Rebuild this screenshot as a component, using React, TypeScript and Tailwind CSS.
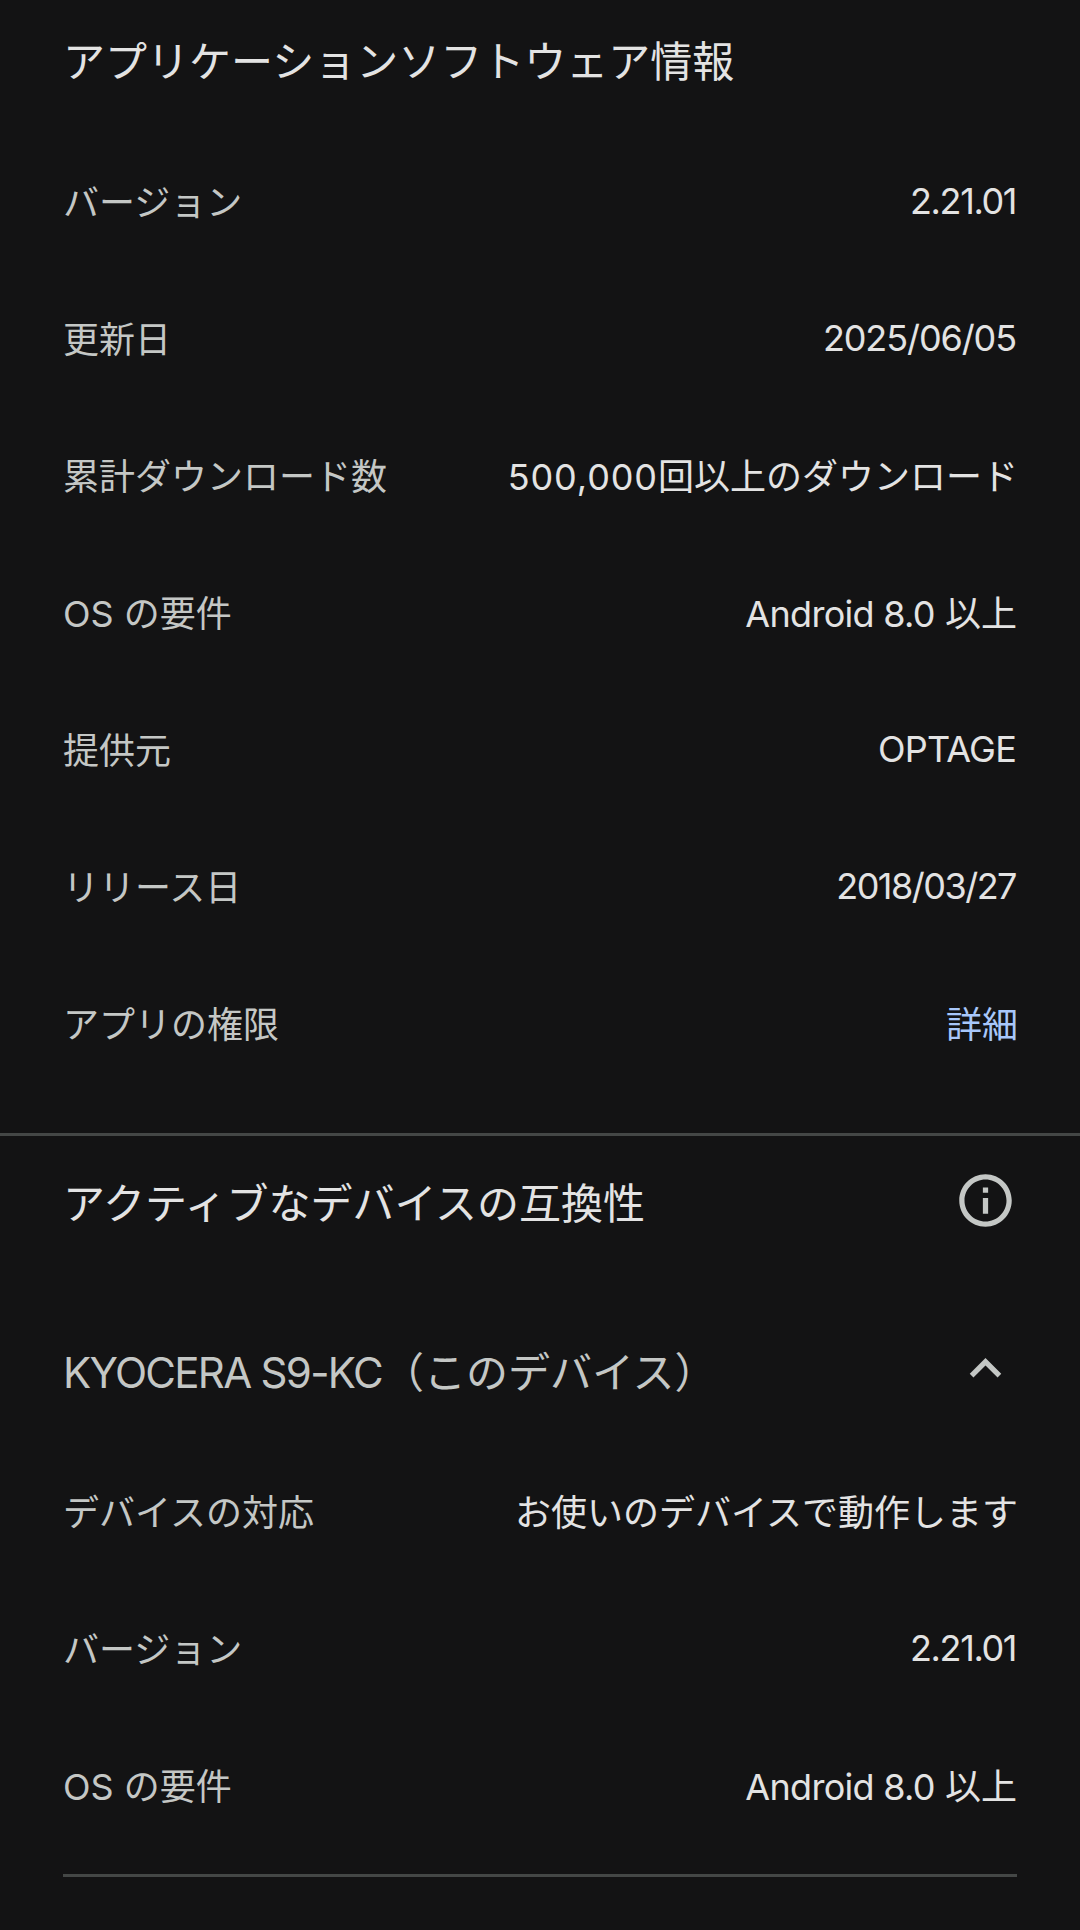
const font = 'font-["Inter","Noto_Sans_CJK_JP",sans-serif]';

type RowProps = { label: string; value: React.ReactNode; valueClass?: string; link?: boolean };

const Row = ({ label, value, valueClass = '', link }: RowProps) => (
  <div className="flex h-[137px] items-center justify-between pl-[63px] pr-16 pt-[2px] text-[36px]">
    <span className="text-[#c4c7c5]">{label}</span>
    <span className={`${link ? 'text-[#a8c7fa]' : 'text-[#e3e3e3]'} ${valueClass}`}>{value}</span>
  </div>
);

const AndroidReq = () => (
  <>
    <span className="tracking-[-0.7px]">Android 8.0</span> 以上
  </>
);

export default function App() {
  return (
    <div
      className={`h-[1930px] w-[1080px] overflow-hidden bg-[#131314] ${font}`}
    >
      <div className="flex h-[120px] items-center pl-[63px] pr-16 pt-[2px] text-[42px] text-[#e3e3e3]">
        アプリケーションソフトウェア情報
      </div>
      <div className="mt-[13px] pb-[41px]">
        <Row label="バージョン" value="2.21.01" valueClass="pb-[4px] tracking-[-1.4px]" />
        <Row label="更新日" value="2025/06/05" valueClass="pb-[4px] tracking-[-1.1px]" />
        <Row
          label="累計ダウンロード数"
          value={
            <>
              <span className="tracking-[0.9px]">500,000</span>回以上のダウンロード
            </>
          }
          valueClass="-mr-[2px]"
        />
        <Row label="OS の要件" value={<AndroidReq />} valueClass="-mr-[1px]" />
        <Row label="提供元" value="OPTAGE" valueClass="pb-[4px] tracking-[-0.8px]" />
        <Row label="リリース日" value="2018/03/27" valueClass="pb-[4px] tracking-[-1.5px]" />
        <Row label="アプリの権限" value="詳細" valueClass="-mr-[2px]" link />
      </div>
      <div className="h-[3px] bg-[#444746]" />

      <div className="flex h-[134px] items-center justify-between pl-[63px] pr-[63px] text-[42px] text-[#e3e3e3]">
        <span>アクティブなデバイスの互換性</span>
        <svg viewBox="0 0 24 24" className="mb-[6px] h-[63px] w-[63px] fill-[#c4c7c5]">
          <path d="M11 7h2v2h-2zm0 4h2v6h-2zm1-9C6.48 2 2 6.48 2 12s4.48 10 10 10 10-4.48 10-10S17.52 2 12 2zm0 18c-4.41 0-8-3.59-8-8s3.59-8 8-8 8 3.59 8 8-3.59 8-8 8z" />
        </svg>
      </div>
      <div className="mt-[34px] flex h-[137px] items-center justify-between pl-[63px] pr-[63px] text-[42px] text-[#c4c7c5]">
        <span>
          <span className="tracking-[-1.7px]">KYOCERA S9-KC</span>（このデバイス）
        </span>
        <svg viewBox="0 0 24 24" className="mb-[8px] h-[63px] w-[63px] fill-[#c4c7c5]">
          <path d="M12 8l-6 6 1.41 1.41L12 10.83l4.59 4.58L18 14z" />
        </svg>
      </div>
      <div className="mt-[2px]">
        <Row label="デバイスの対応" value="お使いのデバイスで動作します" valueClass="-mr-[2px]" />
        <Row label="バージョン" value="2.21.01" valueClass="pb-[4px] tracking-[-1.4px]" />
        <Row label="OS の要件" value={<AndroidReq />} valueClass="-mr-[1px]" />
      </div>
      <div className="mx-[63px] mt-5 h-[3px] bg-[#444746]" />
    </div>
  );
}
